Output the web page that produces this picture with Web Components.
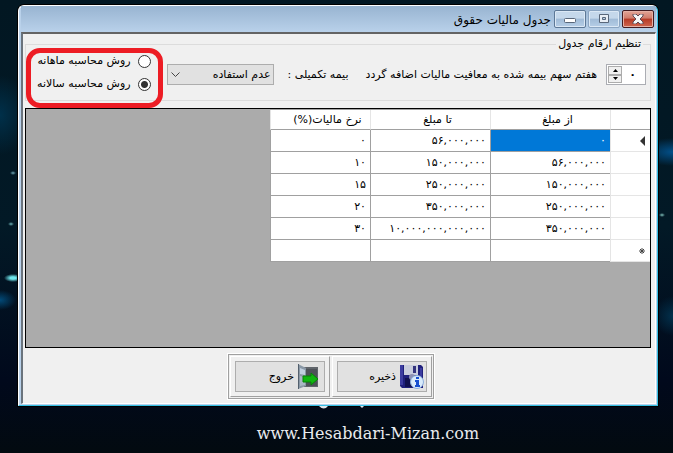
<!DOCTYPE html>
<html lang="fa">
<head>
<meta charset="utf-8">
<title>جدول مالیات حقوق</title>
<style>
* {
  box-sizing: border-box;
}
body {
  margin: 0;
  min-height: 100vh;
  font: 11px/16px "DejaVu Sans", Tahoma, sans-serif;
  color: #000;
}
</style>
</head>
<body>
<desk-top>
  <app-window heading="جدول مالیات حقوق">
    <group-box legend="تنظیم ارقام جدول">
      <spin-box label="هفتم سهم بیمه شده به معافیت مالیات اضافه گردد" value="۰"></spin-box>
      <drop-down label="بیمه تکمیلی :"><option>عدم استفاده</option></drop-down>
      <method-picker></method-picker>
    </group-box>
    <tax-grid></tax-grid>
    <button-bar>
      <tool-button icon="save">ذخیره</tool-button>
      <tool-button icon="exit">خروج</tool-button>
    </button-bar>
  </app-window>
  <span slot="caption">www.Hesabdari-Mizan.com</span>
</desk-top>

<script>
function attach(element, html) {
  const template = document.createElement('template');
  template.innerHTML = `<style>* { box-sizing: border-box; }</style>${html}`;
  const root = element.attachShadow({mode: 'open'});
  root.appendChild(template.content.cloneNode(true));
  return root;
}

class DeskTop extends HTMLElement {
  constructor() {
    super();
    attach(this, `
<style>
:host {
  display: flex;
  flex-direction: column;
  min-height: 100vh;
  padding: 5px 15px 0 18px;
  background:
    radial-gradient(ellipse 3px 2px at 13px 173px, #6fa9b9, transparent),
    radial-gradient(ellipse 3px 2px at 11px 224px, #6fb5b9, transparent),
    radial-gradient(ellipse 9px 4px at 13px 278px, #6fe8ee 30%, transparent),
    radial-gradient(ellipse 16px 10px at 0 300px, #024a78, transparent),
    radial-gradient(ellipse 30px 40px at 0 115px, #00304a, transparent),
    radial-gradient(ellipse 3px 2px at calc(100% - 11px) 215px, #7fc0b9, transparent),
    radial-gradient(ellipse 34px 14px at 100% 152px, #02508a, transparent),
    radial-gradient(ellipse 20px 20px at 100% 316px, #02304c, transparent),
    linear-gradient(#021722, #021926 50%, #01091c 84%, #020a10);
}
footer {
  display: flex;
  flex-direction: column;
  align-items: center;
  padding-left: 60px;
  font: 16px/24px "DejaVu Serif", serif;
  color: #e8ebee;
}
svg {
  display: block;
  margin-right: 50px;
}
.caption {
  margin-top: 10px;
}
</style>
<slot></slot>
<footer>
  <svg width="50" height="6"><path d="M1 0h9q-4 5-9 0zM42 0h4l-2 2z" fill="#dfe5ea"/></svg>
  <div class="caption"><slot name="caption"></slot></div>
</footer>`);
  }
}

class AppWindow extends HTMLElement {
  constructor() {
    super();
    const root = attach(this, `
<style>
:host {
  display: block;
  direction: rtl;
  border: 1px solid #fff;
  border-right-color: #35c0e4;
  border-bottom-color: #35c0e4;
  border-radius: 6px 6px 0 0;
  background: #b9d1ea;
  box-shadow: 0 0 0 1px #000;
  padding: 0 1px 1px 2px;
}
header {
  display: flex;
  align-items: flex-start;
  gap: 2px;
  height: 26px;
  padding: 4px 2px 0;
  background: linear-gradient(#98b4d1, #b9d1ea);
}
h1 {
  margin: 0 1px;
  font-size: 12px;
  font-weight: normal;
  line-height: 20px;
}
button {
  width: 32px;
  height: 18px;
  padding: 0;
  border: 1px solid #5d7896;
  border-radius: 2px;
  background: linear-gradient(#c5d8eb 45%, #a0bbd7 50%, #b6cee7);
  box-shadow: inset 0 0 0 1px #dbe8f5;
}
button.max {
  border-color: #8ba5c2;
}
button.close {
  border-color: #431b20;
  background: linear-gradient(#e2a597, #d07b6a 45%, #b53a26 50%, #cf6650);
  box-shadow: inset 0 0 0 1px #e5b0a4;
}
svg {
  display: block;
  margin: auto;
}
main {
  border: 1px solid #fff;
  border-top: 2px solid #646464;
  border-left: 2px solid #6a737c;
  background: #f0f0f0;
  padding: 2px 4px 4px 2px;
}
</style>
<header>
  <button class="close" aria-label="بستن"><svg width="12" height="10"><path d="M1 0h3l2 2 2-2h3v2L8 5l3 3v2H8L6 8l-2 2H1V8l3-3-3-3z" fill="#f6f6f6" stroke="#5f4a55"/></svg></button>
  <button class="max" aria-label="بزرگ"><svg width="12" height="10"><path d="M1.500.5h9v8h-9zM4.500 3.500h3v2h-3z" fill="#e8eef5" stroke="#59677a" fill-rule="evenodd"/></svg></button>
  <button aria-label="کوچک"><svg width="12" height="10"><rect x=".5" y="4.500" width="11" height="4" rx="1" fill="#fff" stroke="#59677a"/></svg></button>
  <h1></h1>
</header>
<main><slot></slot></main>`);
    root.querySelector('h1').innerText = this.getAttribute('heading');
  }
}

class GroupBox extends HTMLElement {
  constructor() {
    super();
    const root = attach(this, `
<style>
:host {
  display: block;
}
fieldset {
  display: flex;
  align-items: flex-start;
  min-width: 0;
  height: 65px;
  margin: 0;
  padding: 0 4px;
  border: 1px solid #dcdcdc;
}
legend {
  margin: 0 3px;
  padding: 0 2px;
}
</style>
<fieldset><legend></legend><slot></slot></fieldset>`);
    root.querySelector('legend').innerText = this.getAttribute('legend');
  }
}

class SpinBox extends HTMLElement {
  constructor() {
    super();
    const root = attach(this, `
<style>
:host {
  display: flex;
  align-items: center;
  gap: 9px;
  padding-top: 12px;
  white-space: nowrap;
}
.box {
  display: flex;
  width: 40px;
  height: 21px;
  padding: 1px;
  border: 1px solid #abadb3;
  background: #fff;
}
input {
  flex: 1;
  min-width: 0;
  padding: 0 8px;
  border: none;
  outline: none;
  background: none;
  font: inherit;
  font-weight: bold;
}
.arrows {
  display: flex;
  flex-direction: column;
  width: 14px;
}
button {
  display: flex;
  align-items: center;
  justify-content: center;
  flex: 1;
  min-height: 0;
  padding: 0;
  border: 1px solid #acacac;
  background: #f0f0f0;
}
</style>
<div class="box">
  <input id="value">
  <div class="arrows">
    <button aria-label="بیشتر"><svg width="5" height="3"><path d="M0 3h5L2.500 0z"/></svg></button>
    <button aria-label="کمتر"><svg width="5" height="3"><path d="M0 0h5L2.500 3z"/></svg></button>
  </div>
</div>
<label for="value"></label>`);
    root.querySelector('input').value = this.getAttribute('value');
    root.querySelector('label').innerText = this.getAttribute('label');
  }
}

class DropDown extends HTMLElement {
  constructor() {
    super();
    const root = attach(this, `
<style>
:host {
  display: flex;
  align-items: center;
  gap: 14px;
  padding: 12px 17px 0 0;
  white-space: nowrap;
}
.box {
  display: grid;
  align-items: center;
}
select, svg {
  grid-area: 1 / 1;
}
select {
  appearance: none;
  width: 107px;
  height: 21px;
  padding: 0 2px;
  border: 1px solid #adadad;
  border-radius: 0;
  background: #e1e1e1;
  font: inherit;
  color: inherit;
}
svg {
  justify-self: end;
  margin-left: 4px;
  pointer-events: none;
}
</style>
<label for="list"></label>
<div class="box">
  <select id="list"></select>
  <svg width="9" height="6"><path d="M.5.5l4 4 4-4" fill="none" stroke="#444"/></svg>
</div>`);
    root.querySelector('label').innerText = this.getAttribute('label');
    for (const option of this.querySelectorAll('option')) {
      root.querySelector('select').appendChild(option.cloneNode(true));
    }
  }
}

class MethodPicker extends HTMLElement {
  constructor() {
    super();
    attach(this, `
<style>
:host {
  display: flex;
  flex-direction: column;
  gap: 7px;
  position: relative;
  margin-right: auto;
  padding: 1px 6px 0 7px;
  white-space: nowrap;
}
/* red marker drawn round the two options */
:host::after {
  content: "";
  position: absolute;
  inset: -4px -6px -16px -4px;
  border: 5px solid #ed1c24;
  border-radius: 14px;
  pointer-events: none;
}
label {
  display: flex;
  align-items: center;
  gap: 7px;
}
input {
  appearance: none;
  width: 13px;
  height: 13px;
  margin: 0;
  border: 1px solid #333;
  border-radius: 50%;
  background: #fff;
}
input:checked {
  background: radial-gradient(circle, #333 3px, #fff 4px);
}
</style>
<label><input type="radio" name="method">روش محاسبه ماهانه</label>
<label><input type="radio" name="method" checked>روش محاسبه سالانه</label>`);
  }
}

const rows = [
  ['۰', '۵۶,۰۰۰,۰۰۰', '۰'],
  ['۵۶,۰۰۰,۰۰۰', '۱۵۰,۰۰۰,۰۰۰', '۱۰'],
  ['۱۵۰,۰۰۰,۰۰۰', '۲۵۰,۰۰۰,۰۰۰', '۱۵'],
  ['۲۵۰,۰۰۰,۰۰۰', '۳۵۰,۰۰۰,۰۰۰', '۲۰'],
  ['۳۵۰,۰۰۰,۰۰۰', '۱۰,۰۰۰,۰۰۰,۰۰۰,۰۰۰', '۳۰'],
  ['', '', ''],
];
const arrow = '<svg width="5" height="10"><path d="M5 0v10L0 5z" fill="#333"/></svg>';
const star = '<svg width="6" height="6"><path d="M3 0v6M0 3h6M1 1l4 4M5 1L1 5" stroke="#444"/></svg>';

class TaxGrid extends HTMLElement {
  constructor() {
    super();
    const body = rows.map((cells, i) => `
  <tr>
    <th scope="row">${i === 0 ? arrow : i === rows.length - 1 ? star : ''}</th>
    ${cells.map((cell) => `<td>${cell}</td>`).join('')}
  </tr>`).join('');
    attach(this, `
<style>
:host {
  display: block;
  height: 240px;
  margin-top: 7px;
  border: 1px solid #000;
  background: #ababab;
}
table {
  table-layout: fixed;
  width: 380px;
  border-collapse: separate;
  border-spacing: 0;
  border-top: 1px solid #a0a0a0;
  font: inherit;
}
th, td {
  height: 22px;
  padding: 0 3px;
  border-bottom: 1px solid #a0a0a0;
  border-left: 1px solid #a0a0a0;
  background: #fff;
  font-weight: normal;
  line-height: 16px;
  white-space: nowrap;
}
td {
  text-align: right;
  direction: ltr;
}
/* room for the sort mark on the left */
thead th {
  height: 20px;
  padding: 0 3px 0 17px;
  border-left-color: #e5e5e5;
}
tbody th {
  border-bottom-color: #e5e5e5;
  border-left-color: #e5e5e5;
  padding: 0 5px;
  text-align: right;
}
tbody th svg {
  display: block;
}
tr:first-child td:nth-child(2) {
  background: #0078d7;
  color: #fff;
}
</style>
<table>
  <colgroup><col style="width:40px"><col style="width:120px"><col style="width:120px"><col style="width:100px"></colgroup>
  <thead><tr><th></th><th scope="col">از مبلغ</th><th scope="col">تا مبلغ</th><th scope="col">نرخ مالیات(%)</th></tr></thead>
  <tbody>${body}</tbody>
</table>`);
  }
}

class ButtonBar extends HTMLElement {
  constructor() {
    super();
    attach(this, `
<style>
:host {
  display: flex;
  justify-content: center;
  padding: 6px 14px 0 0;
}
.bar {
  display: flex;
  border: 1px solid #a0a0a0;
  outline: 1px solid #fff;
}
::slotted(*) {
  margin: 1px;
}
</style>
<div class="bar"><slot></slot></div>`);
  }
}

const icons = {
  save: `
<path d="M1 1h21l2 2v21H3l-2-2z" fill="#20207c"/>
<path d="M5 1h14v10H5z" fill="#c9cddd"/><path d="M14 2h3v7h-3z" fill="#34347c"/>
<path d="M1 1h3v20H1zM21 4h2v9h-2z" fill="#3c3ca0"/>
<path d="M6 14h12v9H6z" fill="#11114f"/><circle cx="13" cy="13" r="3" fill="#8d91b3"/>
<circle cx="18" cy="18" r="6.500" fill="#d9ebfb" stroke="#8aaedb"/>
<path d="M17 13h3v2h-3zM16 16h4v5h1v2h-5v-2h1v-3h-1z" fill="#164fd0"/>`,
  exit: `
<path d="M7 3h14v20H7z" fill="#60656b"/><path d="M9 5h11v17H9z" fill="#4d5258"/>
<path d="M1 0l8 4v18l-8 3z" fill="#8a98a6"/><path d="M3 4l5 2v5l-5-1z" fill="#c0cfdf"/>
<path d="M3 12l5 1v8l-5 1z" fill="#aab8c5"/><path d="M1 0h1v25H1z" fill="#53606d"/>
<path d="M6 12h8V9l7 6-7 6v-3H6z" fill="#10b510" stroke="#078407"/>`,
};

class ToolButton extends HTMLElement {
  constructor() {
    super();
    const root = attach(this, `
<style>
:host {
  display: block;
  padding: 4px;
  border: 1px solid #a0a0a0;
  border-top-color: #fff;
  border-left-color: #fff;
}
button {
  display: flex;
  align-items: center;
  gap: 3px;
  width: 90px;
  height: 31px;
  padding: 0 2px;
  border: 1px solid #adadad;
  background: #e1e1e1;
  font: inherit;
  color: inherit;
}
</style>
<button><svg width="25" height="25"></svg><span><slot></slot></span></button>`);
    root.querySelector('svg').innerHTML = icons[this.getAttribute('icon')];
  }
}

customElements.define('desk-top', DeskTop);
customElements.define('app-window', AppWindow);
customElements.define('group-box', GroupBox);
customElements.define('spin-box', SpinBox);
customElements.define('drop-down', DropDown);
customElements.define('method-picker', MethodPicker);
customElements.define('tax-grid', TaxGrid);
customElements.define('button-bar', ButtonBar);
customElements.define('tool-button', ToolButton);
</script>
</body>
</html>
